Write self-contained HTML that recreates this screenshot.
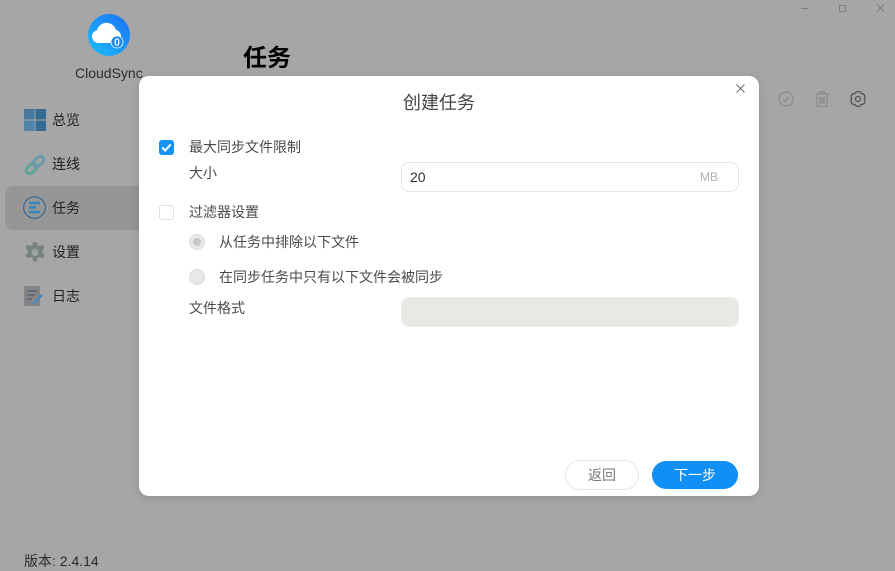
<!DOCTYPE html>
<html><head><meta charset="utf-8">
<style>
html,body{margin:0;padding:0;width:895px;height:571px;overflow:hidden;background:#fff}
*{box-sizing:border-box}
body{font-family:"Liberation Sans","Noto Sans CJK SC",sans-serif;color:#333;position:relative}
.a{position:absolute;white-space:nowrap;line-height:20px}
.ov{position:absolute;left:0;top:0;width:895px;height:571px;background:rgba(0,0,0,.35)}
.nav{font-size:14px;color:#333;left:52px}
.lab{font-size:14px;color:#4a4a4a}
.modal{position:absolute;left:139px;top:76px;width:620px;height:420px;background:#fff;border-radius:10px;box-shadow:0 2px 10px rgba(0,0,0,.12)}
.radio{position:absolute;width:16px;height:16px;border-radius:50%;background:#e8e8e8;border:1px solid #dcdcdc}
</style></head><body>
<div class="a" style="left:5px;top:186px;width:140px;height:44px;background:#e6e6e6;border-radius:8px"></div>

<div class="a" style="left:75px;top:63px;font-size:14px;color:#444">CloudSync</div>
<div class="a" style="left:243px;top:44px;font-size:24px;font-weight:700;color:#000;line-height:30px">任务</div>
<div class="a nav" style="top:110px">总览</div>
<div class="a nav" style="top:154px">连线</div>
<div class="a nav" style="top:198px">任务</div>
<div class="a nav" style="top:242px">设置</div>
<div class="a nav" style="top:286px">日志</div>
<div class="a" style="left:24px;top:551px;font-size:14px;color:#444">版本: 2.4.14</div>

<div class="ov"></div>

<svg class="a" style="left:84px;top:10px" width="50" height="50" viewBox="0 0 50 50">
<defs><linearGradient id="g" x1="0" y1="1" x2="1" y2="0"><stop offset="0" stop-color="#1cc0fa"/><stop offset="1" stop-color="#1b6ff5"/></linearGradient></defs>
<circle cx="25" cy="25" r="21" fill="url(#g)"/>
<path d="M15 33a6.500 6.500 0 0 1-2-12.800c1-4.700 6-8.200 11-7.200 4 .5 7 3.500 8 7a6.500 6.500 0 0 1 5 7l-3 6z" fill="#fff"/>
<circle cx="33" cy="32" r="6" fill="#1b8af0" stroke="#fff" stroke-width=".8"/>
<rect x="31.300" y="28.800" width="3.400" height="6.400" rx="1.700" fill="none" stroke="#fff" stroke-width="1.200"/>
</svg>

<svg class="a" style="left:24px;top:109px" width="22" height="22"><rect width="10.500" height="10.500" fill="#47789c"/><rect x="11.500" width="10.500" height="10.500" fill="#346c96"/><rect y="11.500" width="10.500" height="10.500" fill="#5283a8"/><rect x="11.500" y="11.500" width="10.500" height="10.500" fill="#346c96"/></svg>
<svg class="a" style="left:24px;top:154px" width="22" height="22" viewBox="0 0 22 22" fill="none" stroke-width="3"><rect x="1.500" y="11" width="12" height="7" rx="3.500" transform="rotate(-45 7.500 14.500)" stroke="#5fa596"/><rect x="8.500" y="4" width="12" height="7" rx="3.500" transform="rotate(-45 14.500 7.500)" stroke="#6d9aa8"/></svg>
<svg class="a" style="left:23px;top:196px" width="23" height="23" viewBox="0 0 23 23" fill="none"><circle cx="11.500" cy="11.500" r="10.800" stroke="#2a5f95"/><path d="M6 7h11M6 11.500h7M6 16h11" stroke="#2f86c0" stroke-width="2.600"/></svg>
<svg class="a" style="left:25px;top:242px" width="20" height="21" viewBox="0 0 20 21"><path d="M8 0h4l.5 3 2.500 1 2.500-1.500 2 3.500-2 2v3l2 2-2 3.500-2.500-1.500-2.500 1-.5 3.500h-4l-.5-3.500-2.500-1-2.500 1.500-2-3.500 2-2v-3l-2-2 2-3.500L5 4l2.500-1z" fill="#76837f"/><circle cx="10" cy="10.500" r="3.500" fill="#9aa3a0"/></svg>
<svg class="a" style="left:24px;top:286px" width="22" height="21" viewBox="0 0 22 21"><rect width="16" height="20" fill="#858585"/><path d="M3 5h10M3 9h8M3 13h5" stroke="#566676" stroke-width="1.500"/><path d="M9 18l9-9" stroke="#4a88b8" stroke-width="2.500"/></svg>

<svg class="a" style="left:778px;top:91px" width="16" height="16" viewBox="0 0 16 16" fill="none" stroke="#8f8f8f" stroke-width="1.500"><circle cx="8" cy="8" r="7"/><path d="M5 8.500l2 2 4-4.500"/></svg>
<svg class="a" style="left:814px;top:91px" width="16" height="16" viewBox="0 0 16 16" fill="none" stroke="#8f8f8f" stroke-width="1.500"><path d="M1 3h14M5.500 3V1h5v2M3 3v12.500h10V3M6 6v7M8 6v7M10 6v7"/></svg>
<svg class="a" style="left:850px;top:91px" width="16" height="16" viewBox="0 0 16 16" fill="none" stroke="#555" stroke-width="1.300"><path d="M14.200 8A3.300 3.300 0 0 1 11.100 13.370A3.300 3.300 0 0 1 4.900 13.370A3.300 3.300 0 0 1 1.800 8A3.300 3.300 0 0 1 4.900 2.630A3.300 3.300 0 0 1 11.100 2.630A3.300 3.300 0 0 1 14.200 8z" stroke-linejoin="round"/><circle cx="8" cy="8" r="2.500"/></svg>
<svg class="a" style="left:800px;top:3px" width="90" height="12" viewBox="0 0 90 12" fill="none" stroke="#808080"><path d="M1 5.500h7"/><path d="M39.500 2.500h6v6h-6z"/><path d="M77 1.500l7 7M84 1.500l-7 7"/></svg>

<div class="modal"></div>
<div class="a" style="left:403px;top:92px;font-size:18px;color:#444;line-height:22px">创建任务</div>
<svg class="a" style="left:736px;top:84px" width="9" height="9" fill="none" stroke="#666" stroke-width=".9"><path d="M.5.500l8 8M8.500.500l-8 8"/></svg>

<div class="a" style="left:159px;top:140px;width:15px;height:15px;background:#1593f5;border-radius:3px"></div>
<svg class="a" style="left:159px;top:140px" width="15" height="15" fill="none" stroke="#fff" stroke-width="2"><path d="M3.200 7.500l3 3 5.500-6"/></svg>
<div class="a lab" style="left:189px;top:137px">最大同步文件限制</div>
<div class="a lab" style="left:189px;top:163px">大小</div>
<div class="a" style="left:401px;top:162px;width:338px;height:30px;border:1px solid #e6e6e6;border-radius:8px;background:#fff"></div>
<div class="a" style="left:410px;top:167px;font-size:14px;color:#333">20</div>
<div class="a" style="left:700px;top:167px;font-size:12px;color:#b0b0b0">MB</div>

<div class="a" style="left:159px;top:205px;width:15px;height:15px;border:1px solid #e0e0e0;border-radius:3px;background:#fff"></div>
<div class="a lab" style="left:189px;top:202px">过滤器设置</div>
<div class="radio" style="left:189px;top:234px"></div>
<div class="a" style="left:193px;top:238px;width:8px;height:8px;border-radius:50%;background:#c8c8c8"></div>
<div class="a lab" style="left:219px;top:232px">从任务中排除以下文件</div>
<div class="radio" style="left:189px;top:269px"></div>
<div class="a lab" style="left:219px;top:267px">在同步任务中只有以下文件会被同步</div>
<div class="a lab" style="left:189px;top:298px">文件格式</div>
<div class="a" style="left:401px;top:297px;width:338px;height:30px;background:#e9e9e4;border:1px solid #ececec;border-radius:8px"></div>

<div class="a" style="left:565px;top:460px;width:74px;height:30px;border:1px solid #e6e6e6;border-radius:15px;background:#fff;text-align:center;line-height:29px;font-size:14px;color:#777">返回</div>
<div class="a" style="left:652px;top:461px;width:86px;height:28px;border-radius:14px;background:#1090f5;text-align:center;line-height:28px;font-size:14px;color:#fff">下一步</div>
</body></html>
